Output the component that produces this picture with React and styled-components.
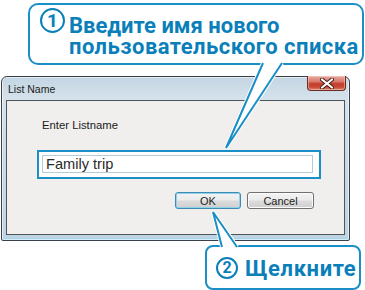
import React from 'react';
import styled, { createGlobalStyle } from 'styled-components';

const GlobalStyle = createGlobalStyle`
  html, body {
    margin: 0;
    padding: 0;
    background: #ffffff;
  }
  body {
    width: 365px;
    height: 290px;
    overflow: hidden;
    font-family: "Liberation Sans", Arial, sans-serif;
  }
`;

const BLUE = '#1a8ec6';
const TEXT_BLUE = '#0b7fb9';

const Canvas = styled.div`
  position: relative;
  width: 365px;
  height: 290px;
  overflow: hidden;
  background: #fff;
`;

const Window = styled.div`
  box-sizing: border-box;
  width: 349px;
  height: 165px;
  margin: 76px 0 0 1px;
  border: 1px solid #3b4148;
  border-radius: 6px 6px 2px 2px;
  background: linear-gradient(to bottom, #c3d6e3 0px, #d5e2eb 22px, #cbdce8 60px, #bfd4e2 100%);
  box-shadow: inset 0 0 0 1px rgba(255, 255, 255, 0.55), inset 0 -2px 0 #a7d6ea;
  display: flex;
  flex-direction: column;
`;

const TitleBar = styled.div`
  height: 23px;
  display: flex;
  align-items: flex-start;
  justify-content: space-between;
  padding: 0 3px 0 6px;
`;

const Title = styled.span`
  font-size: 10.5px;
  line-height: 12px;
  margin-top: 6px;
  color: #1b1b1b;
`;

const CloseButton = styled.div`
  box-sizing: border-box;
  width: 39px;
  height: 15px;
  margin-top: -1px;
  border: 1px solid #6e2a22;
  border-top: none;
  border-radius: 0 0 4px 4px;
  background: linear-gradient(to bottom, #e8aaa0 0%, #d87a6c 40%, #c2402e 55%, #c94a36 80%, #d98a70 100%);
  box-shadow: inset 0 0 0 1px rgba(255, 220, 210, 0.45);
  display: flex;
  align-items: center;
  justify-content: center;
`;

const Client = styled.div`
  box-sizing: border-box;
  width: 339px;
  height: 135px;
  margin-left: 4px;
  border: 1px solid #4d555d;
  background: #f0efed;
  display: flex;
  flex-direction: column;
`;

const Label = styled.div`
  margin: 17px 0 0 35px;
  font-size: 11.3px;
  line-height: 14px;
  color: #1a1a1a;
`;

const InputFrame = styled.div`
  box-sizing: border-box;
  width: 284px;
  height: 29px;
  margin: 18px 0 0 30px;
  border: 2px solid ${BLUE};
  background: #ffffff;
  padding: 3px 6px 4px 3px;
`;

const TextBox = styled.div`
  box-sizing: border-box;
  height: 18px;
  border: 1px solid #b4cbd8;
  padding-left: 3px;
  font-size: 14.6px;
  line-height: 16px;
  color: #2a2a2a;
`;

const ButtonRow = styled.div`
  display: flex;
  justify-content: flex-end;
  gap: 6px;
  margin-top: 13px;
  padding-right: 30px;
`;

const Button = styled.div`
  box-sizing: border-box;
  width: ${(p) => p.$w}px;
  height: 17px;
  border: 1px solid ${(p) => (p.$default ? '#3d8ab4' : '#707070')};
  border-radius: 3px;
  background: linear-gradient(to bottom, #f3f3f3 0%, #ebebeb 48%, #dcdcdc 52%, #cfcfcf 100%);
  box-shadow: ${(p) => (p.$default ? 'inset 0 0 0 1px #8fd3e8' : 'inset 0 0 0 1px #fbfbfb')};
  display: flex;
  align-items: center;
  justify-content: center;
  font-size: 11px;
  color: #1e1e1e;
`;

const Callout = styled.div`
  position: absolute;
  box-sizing: border-box;
  left: ${(p) => p.$x}px;
  top: ${(p) => p.$y}px;
  width: ${(p) => p.$w}px;
  height: ${(p) => p.$h}px;
  border: 2px solid ${BLUE};
  border-radius: ${(p) => p.$r}px;
  background: #ffffff;
  box-shadow: 0 0 0 1px #ffffff;
  display: flex;
  align-items: ${(p) => p.$align || 'flex-start'};
  padding: ${(p) => p.$pad};
  gap: ${(p) => p.$gap}px;
`;

const Step = styled.div`
  box-sizing: border-box;
  flex: none;
  width: ${(p) => p.$size}px;
  height: ${(p) => p.$size}px;
  border: 2px solid ${TEXT_BLUE};
  border-radius: 50%;
  display: flex;
  align-items: center;
  justify-content: center;
  font-family: Roboto, "Liberation Sans", sans-serif;
  font-weight: 700;
  font-size: ${(p) => p.$size - 6}px;
  line-height: 1;
  color: ${TEXT_BLUE};
`;

const CalloutText = styled.div`
  font-family: Roboto, "Liberation Sans", sans-serif;
  font-weight: 700;
  font-size: 22px;
  line-height: ${(p) => p.$lh}px;
  letter-spacing: ${(p) => p.$ls || 0}px;
  color: ${TEXT_BLUE};
  white-space: nowrap;
  padding-top: ${(p) => p.$pt || 0}px;
`;

const Line = styled.div`
  letter-spacing: ${(p) => p.$ls || 0}px;
`;

const Pointers = styled.svg`
  position: absolute;
  left: 0;
  top: 0;
  pointer-events: none;
`;

const CloseGlyph = () => (
  <svg width="14" height="11" viewBox="0 0 14 11">
    <path d="M2 1.5 L12 9.5 M12 1.5 L2 9.5" stroke="#4a1a14" strokeWidth="4" strokeLinecap="round" />
    <path d="M2 1.5 L12 9.5 M12 1.5 L2 9.5" stroke="#ffffff" strokeWidth="2.2" strokeLinecap="round" />
  </svg>
);

const Pointer = ({ a, tip, b }) => (
  <g>
    <polygon points={`${a} ${tip} ${b}`} fill="#ffffff" />
    <polyline points={`${a} ${tip} ${b}`} fill="none" stroke="#ffffff" strokeWidth="4" strokeLinejoin="miter" />
    <polyline points={`${a} ${tip} ${b}`} fill="none" stroke={BLUE} strokeWidth="2" strokeLinejoin="miter" />
  </g>
);

const App = () => {
  return (
    <>
      <GlobalStyle />
      <Canvas>
        <Window>
          <TitleBar>
            <Title>List Name</Title>
            <CloseButton>
              <CloseGlyph />
            </CloseButton>
          </TitleBar>
          <Client>
            <Label>Enter Listname</Label>
            <InputFrame>
              <TextBox>Family trip</TextBox>
            </InputFrame>
            <ButtonRow>
              <Button $w={66} $default>OK</Button>
              <Button $w={67}>Cancel</Button>
            </ButtonRow>
          </Client>
        </Window>

        <Callout $x={28} $y={3} $w={336} $h={62} $r={10} $pad="3px 0 0 10px" $gap={4}>
          <Step $size={25}>1</Step>
          <CalloutText $lh={21} $pt={7}>
            <Line>Введите имя нового</Line>
            <Line $ls={0.45}>пользовательского списка</Line>
          </CalloutText>
        </Callout>

        <Callout $x={205} $y={245} $w={156} $h={45} $r={8} $pad="0 0 0 9px" $gap={7} $align="center">
          <Step $size={22}>2</Step>
          <CalloutText $lh={22} $pt={2} $ls={0.6}>Щелкните</CalloutText>
        </Callout>

        <Pointers width="365" height="290" viewBox="0 0 365 290">
          <polygon points="263,62 282,62 226,148" fill="#ffffff" />
          <Pointer a="263,63" tip="226,148" b="282,63" />
          <polygon points="222,248 237,248 213,212" fill="#ffffff" />
          <Pointer a="222,247" tip="213,212" b="237,247" />
        </Pointers>
      </Canvas>
    </>
  );
};

export default App;
